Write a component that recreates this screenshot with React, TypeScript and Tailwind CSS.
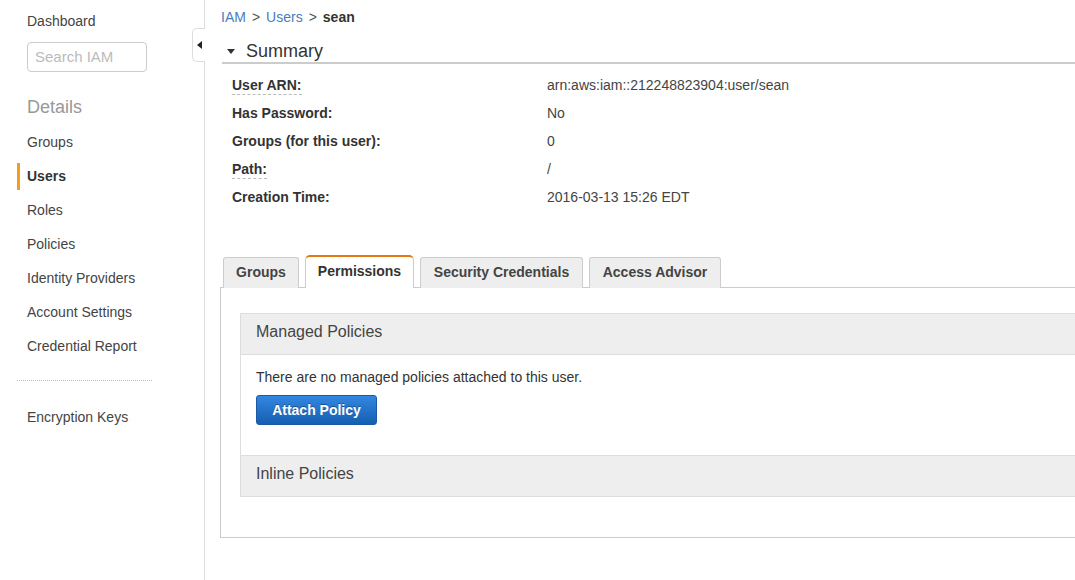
import React from 'react';

// IAM user detail page (sean)

const navItems = [
    'Groups',
    'Users',
    'Roles',
    'Policies',
    'Identity Providers',
    'Account Settings',
    'Credential Report',
];

const summaryRows = [
    { label: 'User ARN:', value: 'arn:aws:iam::212248823904:user/sean', dotted: true },
    { label: 'Has Password:', value: 'No', dotted: false },
    { label: 'Groups (for this user):', value: '0', dotted: false },
    { label: 'Path:', value: '/', dotted: true },
    { label: 'Creation Time:', value: '2016-03-13 15:26 EDT', dotted: false },
];

const tabs = [
    { name: 'Groups', width: 'w-[76px]' },
    { name: 'Permissions', width: 'w-[109px]' },
    { name: 'Security Credentials', width: 'w-[163px]' },
    { name: 'Access Advisor', width: 'w-[132px]' },
];

function Sidebar()
{
    return (
        <aside className="relative w-[205px] shrink-0 border-r border-[#dddddd] h-full">
            <div className="pl-[27px]">
                <div className="mt-[4px] h-[34px] flex items-center text-[14px] text-[#444444]">Dashboard</div>
                <div className="mt-[4px] w-[120px] h-[30px] border border-[#cccccc] rounded-[4px] flex items-center px-[7px] text-[15px] text-[#bbbbbb]">
                    Search IAM
                </div>
                <div className="mt-[18px] h-[34px] flex items-center text-[18px] text-[#999999]">Details</div>
            </div>
            <nav className="mt-[1px]">
                {navItems.map((item) => (
                    <div key={item} className="h-[34px] flex items-center">
                        {item === 'Users' ? (
                            <div className="flex items-center h-[27px] ml-[17px] pl-[7px] border-l-[3px] border-[#f39c1e] text-[14px] font-bold text-[#333333]">
                                {item}
                            </div>
                        ) : (
                            <div className="pl-[27px] text-[14px] text-[#444444]">{item}</div>
                        )}
                    </div>
                ))}
            </nav>
            <div className="ml-[17px] w-[135px] mt-[17px] border-t border-dotted border-[#bbbbbb]" />
            <div className="mt-[19px] h-[34px] flex items-center pl-[27px] text-[14px] text-[#444444]">Encryption Keys</div>

            {/* collapse handle */}
            <div className="absolute right-[-1px] top-[28px] w-[13px] h-[34px] bg-white border border-r-0 border-[#dddddd] rounded-l-[5px] flex items-center justify-center">
                <div className="w-0 h-0 border-y-[4px] border-y-transparent border-r-[5px] border-r-[#222222]" />
            </div>
        </aside>
    );
}

export default function App()
{
    return (
        <div className="w-[1075px] h-[580px] overflow-hidden bg-white flex font-['Liberation_Sans',Arial,sans-serif]">
            <Sidebar />
            <main className="flex-1 ml-[15px] -mr-[30px] min-w-0">
                {/* breadcrumb */}
                <div className="h-[34px] flex items-center pl-[1px] text-[14px] text-[#555555]">
                    <span className="text-[#4a7cc1]">IAM</span>
                    <span className="mx-[6px]">&gt;</span>
                    <span className="text-[#4a7cc1]">Users</span>
                    <span className="mx-[6px]">&gt;</span>
                    <span className="font-bold text-[#333333]">sean</span>
                </div>

                {/* summary */}
                <div className="ml-[2px] mt-[6px] h-[24px] flex items-center border-b-2 border-[#cccccc]">
                    <div className="ml-[5px] w-0 h-0 border-x-[4px] border-x-transparent border-t-[5px] border-t-[#333333]" />
                    <span className="ml-[11px] text-[18px] text-[#333333]">Summary</span>
                </div>
                <div className="mt-[7px] pl-[12px]">
                    {summaryRows.map((row) => (
                        <div key={row.label} className="h-[28px] flex items-center text-[14px]">
                            <div className="w-[315px]">
                                <span className={row.dotted ? 'font-bold text-[#333333] border-b border-dashed border-[#bbbbbb] pb-[1px]' : 'font-bold text-[#333333]'}>
                                    {row.label}
                                </span>
                            </div>
                            <div className="text-[#444444]">{row.value}</div>
                        </div>
                    ))}
                </div>

                {/* tabs */}
                <div className="mt-[45px] flex items-end gap-[6px] pl-[3px] h-[32px] relative z-10">
                    {tabs.map((tab) => (
                        tab.name === 'Permissions' ? (
                            <div key={tab.name} className={`${tab.width} h-[33px] pb-[2px] bg-white border border-[#cccccc] border-b-0 border-t-2 border-t-[#e47911] rounded-t-[5px] flex items-center justify-center text-[14px] font-bold text-[#333333]`}>
                                {tab.name}
                            </div>
                        ) : (
                            <div key={tab.name} className={`${tab.width} h-[31px] pb-[1px] bg-[#eeeeee] border border-[#cccccc] border-b-0 rounded-t-[3px] flex items-center justify-center text-[14px] font-bold text-[#444444]`}>
                                {tab.name}
                            </div>
                        )
                    ))}
                </div>

                <div className="-mt-px border border-[#cccccc] pt-[25px] pl-[19px] pb-[40px]">
                    <div className="border border-[#dddddd]">
                        <div className="h-[41px] pb-[5px] bg-[#eeeeee] border-b border-[#dddddd] flex items-center pl-[15px] text-[16px] text-[#444444]">
                            Managed Policies
                        </div>
                        <div className="h-[100px] pl-[15px] pt-[13px]">
                            <div className="text-[14px] text-[#333333] leading-[18px]">There are no managed policies attached to this user.</div>
                            <button className="mt-[9px] w-[121px] h-[30px] rounded-[3px] border border-[#1b5aa3] bg-gradient-to-b from-[#3387e0] to-[#145fb3] text-white text-[14px] font-bold [text-shadow:0_-1px_0_rgba(0,0,0,0.35)]">
                                Attach Policy
                            </button>
                        </div>
                        <div className="h-[41px] pb-[5px] bg-[#eeeeee] border-t border-[#dddddd] flex items-center pl-[15px] text-[16px] text-[#444444]">
                            Inline Policies
                        </div>
                    </div>
                </div>
            </main>
        </div>
    );
}
